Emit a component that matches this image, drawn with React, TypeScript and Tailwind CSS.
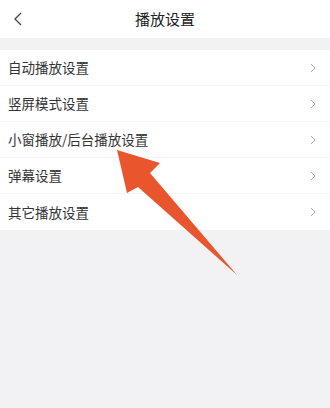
import React from "react";

const items = [
    "自动播放设置",
    "竖屏模式设置",
    "小窗播放/后台播放设置",
    "弹幕设置",
    "其它播放设置",
];

export default function App() {
    return (
        <div
            className="relative w-[330px] h-[408px] bg-[#f2f2f4] overflow-hidden"
            style={{ fontFamily: '"Noto Sans CJK SC", "Noto Sans", sans-serif' }}
        >
            {/* Header */}
            <div className="relative h-[38px] bg-white flex items-center justify-center">
                <svg className="absolute left-[13px] top-[12px]" width="10" height="14" viewBox="0 0 10 14">
                    <path d="M8 1 L2 7 L8 13" fill="none" stroke="#444" strokeWidth="1.3" />
                </svg>
                <span className="text-[15px] text-[#222]">播放设置</span>
            </div>

            {/* List */}
            <div className="mt-[12px] bg-white">
                {items.map((label, i) => (
                    <div
                        key={label}
                        className={
                            "h-[36px] pl-[8px] pr-[14px] flex items-center justify-between " +
                            (i < items.length - 1 ? "border-b border-[#f4f4f6]" : "")
                        }
                    >
                        <span className="text-[13.5px] text-[#333]">{label}</span>
                        <svg width="6" height="10" viewBox="0 0 6 10">
                            <path d="M1 1 L5 5 L1 9" fill="none" stroke="#aaa" strokeWidth="1" />
                        </svg>
                    </div>
                ))}
            </div>

            {/* Annotation arrow */}
            <svg className="absolute left-0 top-0" width="330" height="408" viewBox="0 0 330 408">
                <polygon
                    points="117,150 160,163 150,173 237,275 138,187 127,193"
                    fill="#e9552c"
                />
            </svg>
        </div>
    );
}
